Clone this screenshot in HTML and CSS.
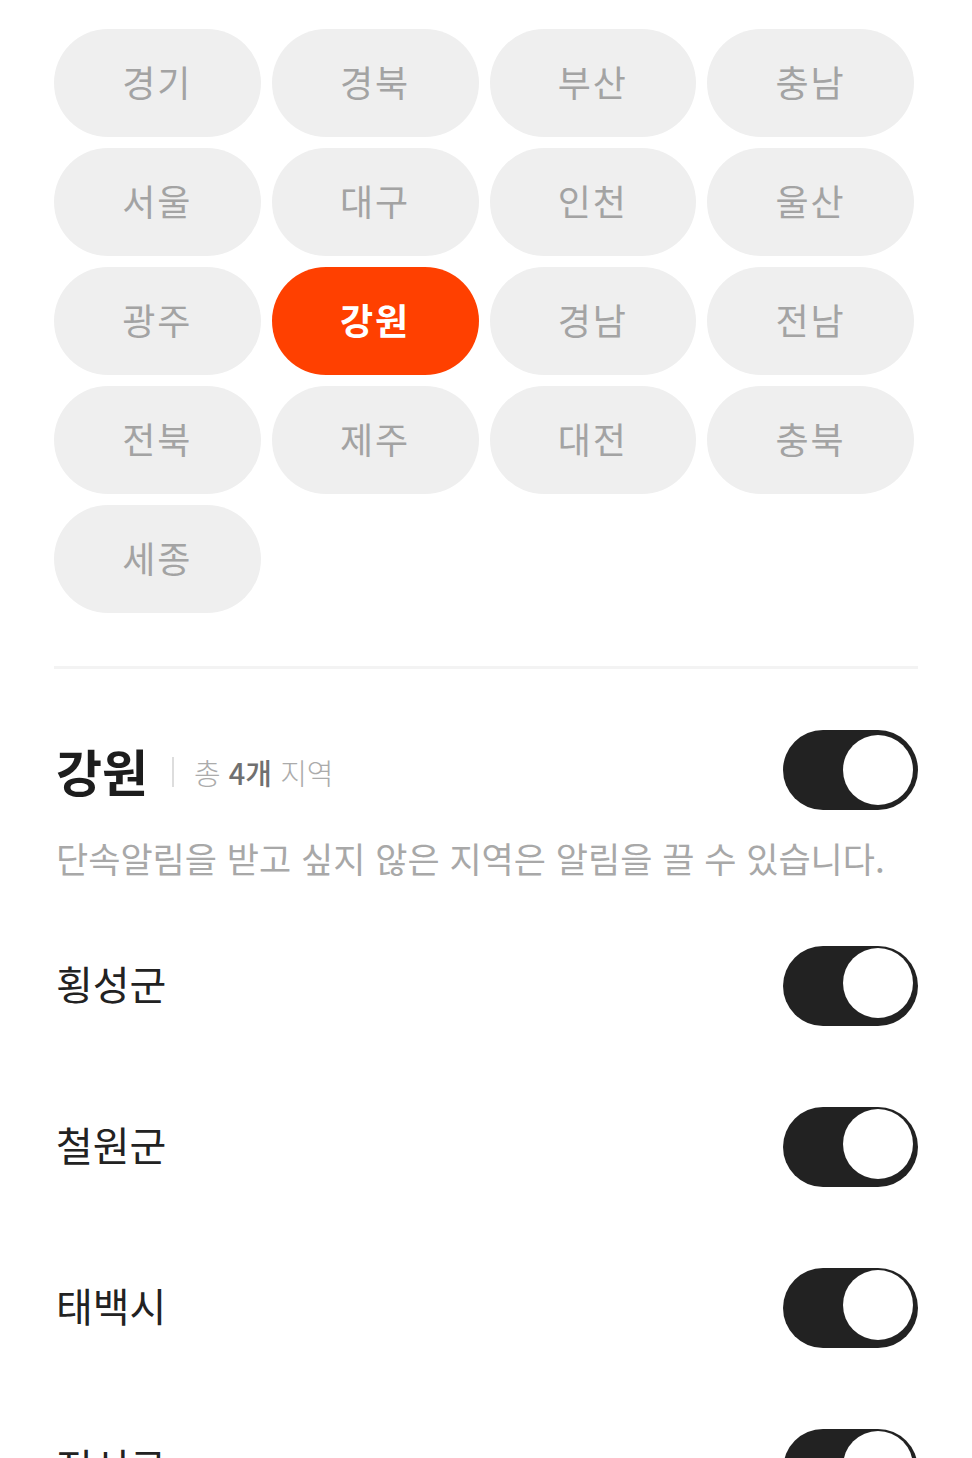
FILE: index.html
```html
<!DOCTYPE html>
<html lang="ko">
<head>
    <meta charset="UTF-8">
    <meta name="viewport" content="width=device-width, initial-scale=1.0">
    <title>단속알림 지역 설정</title>
    <link rel="stylesheet" href="styles.css">
</head>
<body>
<div class="page">
    <!-- 시/도 선택 -->
    <div class="region-grid">
        <button class="region-chip">경기</button>
        <button class="region-chip">경북</button>
        <button class="region-chip">부산</button>
        <button class="region-chip">충남</button>
        <button class="region-chip">서울</button>
        <button class="region-chip">대구</button>
        <button class="region-chip">인천</button>
        <button class="region-chip">울산</button>
        <button class="region-chip">광주</button>
        <button class="region-chip active">강원</button>
        <button class="region-chip">경남</button>
        <button class="region-chip">전남</button>
        <button class="region-chip">전북</button>
        <button class="region-chip">제주</button>
        <button class="region-chip">대전</button>
        <button class="region-chip">충북</button>
        <button class="region-chip">세종</button>
    </div>

    <hr class="divider">

    <!-- 선택된 지역 -->
    <div class="section-header">
        <div class="section-title">
            <h2>강원</h2>
            <span class="bar"></span>
            <span class="count">총 <b>4개</b> 지역</span>
        </div>
        <span class="toggle on"><span class="knob"></span></span>
    </div>
    <p class="desc">단속알림을 받고 싶지 않은 지역은 알림을 끌 수 있습니다.</p>

    <ul class="area-list">
        <li><span>횡성군</span><span class="toggle on"><span class="knob"></span></span></li>
        <li><span>철원군</span><span class="toggle on"><span class="knob"></span></span></li>
        <li><span>태백시</span><span class="toggle on"><span class="knob"></span></span></li>
        <li><span>정선군</span><span class="toggle on"><span class="knob"></span></span></li>
    </ul>
</div>
</body>
</html>
```

FILE: styles.css
```css
body {
    margin: 0;
    font-family: "Noto Sans CJK KR", "Noto Sans", sans-serif;
    background-color: #fff;
    color: #222;
}

.page {
    padding: 29px 54px 0;
}

.region-grid {
    display: grid;
    grid-template-columns: repeat(4, 1fr);
    column-gap: 11px;
    row-gap: 11px;
    width: 860px;
}

.region-chip {
    height: 108px;
    border: none;
    border-radius: 54px;
    background-color: #efefef;
    color: #a3a3a3;
    font-family: inherit;
    font-size: 36px;
    letter-spacing: 2px;
    line-height: 1;
    padding: 0 0 4px;
    cursor: pointer;
}

.region-chip.active {
    background-color: #ff4000;
    color: #fff;
    font-weight: bold;
}

.divider {
    border: none;
    height: 3px;
    background-color: #f3f3f3;
    margin: 53px 0 0;
}

.section-header {
    display: flex;
    align-items: center;
    justify-content: space-between;
    margin-top: 61px;
}

.section-title {
    display: flex;
    align-items: center;
}

.section-title h2 {
    margin: 0 0 0 2px;
    font-size: 50px;
    font-weight: bold;
    line-height: 1;
    color: #1d1d1d;
}

.section-title .bar {
    width: 2px;
    height: 30px;
    background-color: #ddd;
    margin: 4px 20px 0 24px;
}

.section-title .count {
    font-size: 29px;
    color: #ababab;
    font-weight: 300;
    margin-top: 4px;
}

.section-title .count b {
    color: #707070;
    font-weight: 500;
}

.desc {
    margin: 24px 0 0 2px;
    font-size: 35px;
    line-height: 48px;
    color: #a8a8a8;
    letter-spacing: 0;
}

.area-list {
    list-style: none;
    margin: 64px 0 0;
    padding: 0;
}

.area-list li {
    display: flex;
    align-items: center;
    justify-content: space-between;
    height: 80px;
    margin-bottom: 81px;
    font-size: 40px;
    color: #222;
}

.area-list li span:first-child {
    margin: 0 0 6px 2px;
}

.toggle {
    width: 135px;
    height: 80px;
    border-radius: 40px;
    background-color: #ccc;
    display: flex;
    align-items: center;
    padding: 0 5px;
    box-sizing: border-box;
}

.toggle.on {
    background-color: #222;
    justify-content: flex-end;
}

.toggle .knob {
    width: 70px;
    height: 70px;
    border-radius: 50%;
    background-color: #fff;
}
```
